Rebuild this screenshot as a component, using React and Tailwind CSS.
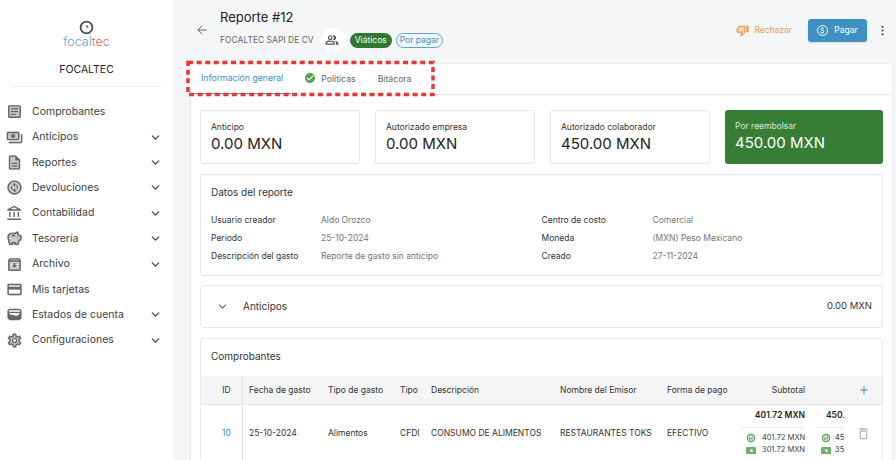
import { ChevronDown, ArrowLeft, Plus, MoreVertical } from 'lucide-react';
import {
  MdArticle, MdOutlineArticle, MdOutlinePayments, MdPayments, MdDescription, MdOutlineDescription,
  MdChangeCircle, MdOutlineChangeCircle, MdOutlineAccountBalance, MdSavings, MdOutlineSavings, MdOutlineArchive, MdArchive,
  MdCreditCard, MdOutlineCreditCard, MdWallet, MdSettings, MdOutlineSettings, MdOutlinePeopleAlt, MdThumbDown, MdOutlineThumbDown, MdOutlineDelete,
  MdCheckCircle, MdOutlineCheckCircle, MdAttachMoney,
} from 'react-icons/md';

const FONT = "font-['Inter','Noto_Sans',sans-serif]";

function TwoTone({ fill: Fill, line: Line, size = 17, className = 'text-[#62676b]' }) {
  return (
    <span className={`relative block ${className}`} style={{ width: size, height: size }}>
      {Fill && <Fill size={size} className="absolute inset-0 opacity-35" />}
      <Line size={size} className="absolute inset-0" />
    </span>
  );
}

const menu = [
  { label: 'Comprobantes', fill: MdArticle, line: MdOutlineArticle },
  { label: 'Anticipos', fill: MdPayments, line: MdOutlinePayments, arrow: true },
  { label: 'Reportes', fill: MdDescription, line: MdOutlineDescription, arrow: true },
  { label: 'Devoluciones', fill: MdChangeCircle, line: MdOutlineChangeCircle, arrow: true },
  { label: 'Contabilidad', fill: null, line: MdOutlineAccountBalance, arrow: true },
  { label: 'Tesorería', fill: MdSavings, line: MdOutlineSavings, arrow: true },
  { label: 'Archivo', fill: MdArchive, line: MdOutlineArchive, arrow: true },
  { label: 'Mis tarjetas', fill: MdCreditCard, line: MdOutlineCreditCard },
  { label: 'Estados de cuenta', fill: null, line: MdWallet, arrow: true },
  { label: 'Configuraciones', fill: MdSettings, line: MdOutlineSettings, arrow: true },
];

function Sidebar() {
  return (
    <aside className="w-[173px] shrink-0 bg-white flex flex-col items-stretch">
      <div className="flex flex-col items-center pt-[20px]">
        <svg width="15" height="15" viewBox="0 0 16 16">
          <circle cx="8" cy="8" r="6.3" fill="none" stroke="#4a5058" strokeWidth="2" />
          <circle cx="8.6" cy="7" r="1.3" fill="#e5483f" />
        </svg>
        <div className="text-[12.5px] leading-[13px] font-light text-[#6ba3d0]">
          focal<span className="text-[#e0685f]">tec</span>
        </div>
        <div className="text-[10.5px] leading-[14px] mt-[15px] text-[#222]">FOCALTEC</div>
      </div>
      <div className="mx-[11px] mt-[9px] border-t border-[#eceef0]" />
      <nav className="mt-[12px] flex flex-col">
        {menu.map((m) => (
          <div key={m.label} className="h-[25.4px] flex items-center pl-[6px] pr-[11px]">
            <span className="w-[26px] flex justify-start">
              <TwoTone fill={m.fill} line={m.line} />
            </span>
            <span className="flex-1 text-[10.5px] text-[#3d4246]">{m.label}</span>
            {m.arrow && <ChevronDown size={13} strokeWidth={2.2} className="text-[#3a3f44]" />}
          </div>
        ))}
      </nav>
    </aside>
  );
}

function Amount({ label, value, green }) {
  return (
    <div className={`flex-1 h-[54px] rounded-[3px] px-[10px] pt-[11px] ${green ? 'bg-[#367d35] text-white' : 'bg-white border border-[#e8e9eb] text-[#222]'}`}>
      <div className={`text-[8.5px] leading-[11px] ${green ? 'text-[#dcebdc]' : 'text-[#333]'}`}>{label}</div>
      <div className="text-[15px] leading-[18px] mt-[2px]">{value}</div>
    </div>
  );
}

function Field({ label, value, w }) {
  return (
    <div className="flex h-[18px] items-center text-[8.5px]">
      <span className="text-[#333]" style={{ width: w }}>{label}</span>
      <span className="text-[#757575]">{value}</span>
    </div>
  );
}

const cols = [
  ['Fecha de gasto', 'w-[79px]', '25-10-2024'],
  ['Tipo de gasto', 'w-[72px]', 'Alimentos'],
  ['Tipo', 'w-[31px]', 'CFDI'],
  ['Descripción', 'w-[129px]', 'CONSUMO DE ALIMENTOS'],
  ['Nombre del Emisor', 'w-[107px]', 'RESTAURANTES TOKS'],
  ['Forma de pago', 'w-[80px]', 'EFECTIVO'],
];

function Breakdown({ total, a, b, gap }) {
  return (
    <div className="h-full flex flex-col items-end overflow-hidden">
      <div className="h-[21px] flex items-center text-[8.5px] font-semibold text-[#222] whitespace-nowrap">{total}</div>
      <div className="w-full border-t border-[#eeeeee] mt-[1px] pt-[4px] text-[7.5px] text-[#444] whitespace-nowrap">
        <div className="flex items-center h-[12px] pl-[5px]" style={{ gap }}>
          <TwoTone fill={MdCheckCircle} line={MdOutlineCheckCircle} size={10} className="text-[#4c9a4a] shrink-0" />
          <span>{a}</span>
        </div>
        <div className="flex items-center h-[12px] pl-[5px]" style={{ gap }}>
          <span className="w-[10px] h-[7px] bg-[#6cb06c] shrink-0 rounded-[1px] flex items-center justify-center">
            <span className="w-[3px] h-[3px] rounded-full bg-[#e6f2e6]" />
          </span>
          <span>{b}</span>
        </div>
      </div>
    </div>
  );
}

export default function App() {
  return (
    <div className={`${FONT} relative w-[896px] h-[460px] overflow-hidden flex bg-[#f5f6f8]`}>
      <Sidebar />
      <main className="flex-1 min-w-0 pl-[17px] pr-[3px]">
        <header className="h-[63px] flex items-center pr-[4px]">
          <ArrowLeft size={14} strokeWidth={1.5} className="text-[#555] ml-[5px] mr-[11px] mt-[-3px]" />
          <div className="flex-1 mb-[2px]">
            <div className="text-[13px] leading-[16px] text-[#222]">Reporte #12</div>
            <div className="flex items-center mt-[3px]">
              <span className="text-[8.5px] text-[#666]">FOCALTEC SAPI DE CV</span>
              <span className="ml-[6px] w-[25px] h-[25px] rounded-full bg-white flex items-center justify-center">
                <MdOutlinePeopleAlt size={14} className="text-[#555]" />
              </span>
              <span className="ml-[5px] h-[15px] px-[5px] rounded-full bg-[#2f7a30] text-white text-[8.5px] flex items-center">Viáticos</span>
              <span className="ml-[4px] h-[15px] px-[3px] rounded-full border border-[#5ba3d0] text-[#3d8fc2] text-[8.5px] flex items-center">Por pagar</span>
            </div>
          </div>
          <TwoTone fill={MdThumbDown} line={MdOutlineThumbDown} size={13} className="text-[#ee9a4d] mt-[-2px]" />
          <span className="ml-[5px] text-[8.5px] text-[#ee9a4d] mt-[-2px]">Rechazar</span>
          <button className="ml-[16px] w-[59px] h-[23px] mt-[-2px] rounded-[3px] bg-[#3f91c2] shadow-sm text-white text-[8.5px] flex items-center justify-center gap-[6px]">
            <span className="w-[11px] h-[11px] rounded-full border border-white flex items-center justify-center">
              <MdAttachMoney size={9} />
            </span>
            Pagar
          </button>
          <MoreVertical size={13} className="text-[#444] ml-[9px] mt-[-2px]" />
        </header>

        <section className="bg-white border border-[#eceef0] h-[420px] overflow-hidden">
          <div className="h-[31px] flex items-center border-b border-[#e8e9eb] text-[8.7px] text-[#666]">
            <span className="h-full flex items-center pl-[10px] pr-[8px] pt-[1px] border-b border-[#3d8fc2] text-[#3d8fc2]">Información general</span>
            <MdCheckCircle size={12} className="ml-[13px] mt-[-2px] text-[#5a9f55]" />
            <span className="ml-[5px] pt-[1px]">Políticas</span>
            <span className="ml-[22px] pt-[1px]">Bitácora</span>
          </div>

          <div className="px-[9px] pt-[15px] flex flex-col">
            <div className="flex gap-[15px]">
              <Amount label="Anticipo" value="0.00 MXN" />
              <Amount label="Autorizado empresa" value="0.00 MXN" />
              <Amount label="Autorizado colaborador" value="450.00 MXN" />
              <Amount label="Por reembolsar" value="450.00 MXN" green />
            </div>

            <div className="mt-[10px] h-[102px] border border-[#e8e9eb] rounded-[3px] px-[10px] pt-[10px]">
              <div className="text-[10px] leading-[14px] text-[#333]">Datos del reporte</div>
              <div className="grid grid-cols-2 mt-[12px]">
                <div>
                  <Field label="Usuario creador" value="Aldo Orozco" w={110} />
                  <Field label="Periodo" value="25-10-2024" w={110} />
                  <Field label="Descripción del gasto" value="Reporte de gasto sin anticipo" w={110} />
                </div>
                <div>
                  <Field label="Centro de costo" value="Comercial" w={111} />
                  <Field label="Moneda" value="(MXN) Peso Mexicano" w={111} />
                  <Field label="Creado" value="27-11-2024" w={111} />
                </div>
              </div>
            </div>

            <div className="mt-[9px] h-[43px] border border-[#e8e9eb] rounded-[3px] flex items-center pl-[15px] pr-[10px]">
              <ChevronDown size={13} className="text-[#666]" />
              <span className="ml-[14px] flex-1 text-[10px] text-[#333]">Anticipos</span>
              <span className="text-[9.5px] text-[#333]">0.00 MXN</span>
            </div>

            <div className="mt-[10px] border border-[#e8e9eb] rounded-[3px]">
              <div className="h-[37px] pb-[3px] flex items-center pl-[10px] text-[10px] text-[#333]">Comprobantes</div>
              <div className="flex h-[29px] items-center bg-[#f5f5f5] border-b border-[#e8e9eb] text-[8.5px] text-[#333]">
                <div className="w-[42px] h-full flex items-center justify-center pl-[10px] border-r border-[#e0e0e0]">ID</div>
                <div className="w-[6px]" />
                {cols.map((c) => (
                  <div key={c[0]} className={`${c[1]} whitespace-nowrap`}>{c[0]}</div>
                ))}
                <div className="w-[58px] text-right">Subtotal</div>
                <div className="w-[40px]" />
                <div className="w-[37px] flex justify-center">
                  <Plus size={12} className="text-[#3d8fc2]" />
                </div>
              </div>
              <div className="flex h-[56px] items-center text-[8.5px] text-[#333]">
                <div className="w-[42px] h-full flex items-center justify-center pl-[10px] border-r border-[#e0e0e0] text-[#3d8fc2]">10</div>
                <div className="w-[6px]" />
                {cols.map((c) => (
                  <div key={c[0]} className={`${c[1]} whitespace-nowrap`}>{c[2]}</div>
                ))}
                <div className="w-[58px] h-full">
                  <div className="w-[64px] ml-[-6px] h-full">
                    <Breakdown total="401.72 MXN" a="401.72 MXN" b="301.72 MXN" gap={6} />
                  </div>
                </div>
                <div className="w-[40px] h-full pl-[11px]">
                  <div className="w-[29px] h-full">
                    <Breakdown total="450." a="45" b="35" gap={4} />
                  </div>
                </div>
                <div className="w-[37px] flex justify-center">
                  <MdOutlineDelete size={15} className="text-[#b5b5b5]" />
                </div>
              </div>
            </div>
          </div>
        </section>
      </main>

      <svg className="absolute left-[186px] top-[59px]" width="250" height="38">
        <rect x="2" y="3.5" width="245" height="32" fill="none" stroke="#e53935" strokeWidth="3.5" strokeDasharray="5 3.6" />
      </svg>
    </div>
  );
}
